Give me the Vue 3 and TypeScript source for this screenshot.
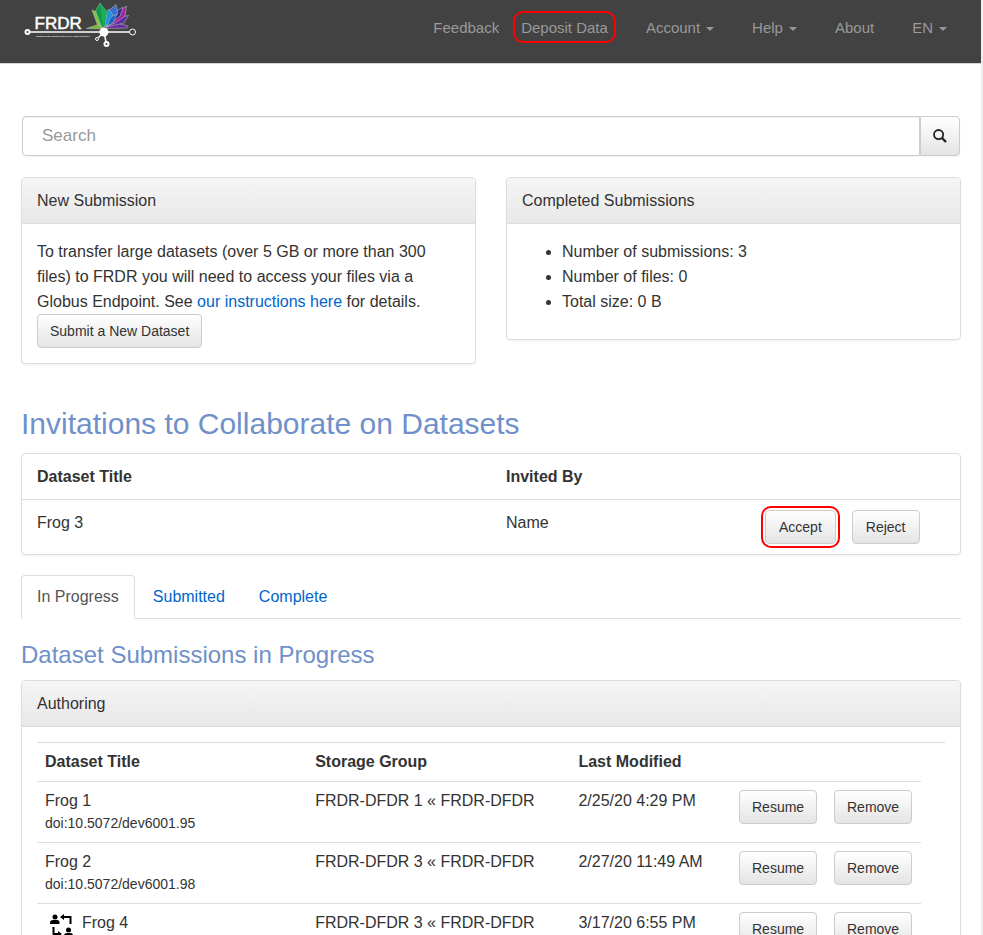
<script setup lang="ts">
import { ref } from 'vue'

interface NavItem {
  label: string
  menu: boolean
}

interface Submission {
  title: string
  doi?: string
  group: string
  modified: string
  shared: boolean
}

const navItems: NavItem[] = [
  { label: 'Account', menu: true },
  { label: 'Help', menu: true },
  { label: 'About', menu: false },
  { label: 'EN', menu: true },
]

const stats: string[] = ['Number of submissions: 3', 'Number of files: 0', 'Total size: 0 B']

const tabs: string[] = ['In Progress', 'Submitted', 'Complete']
const activeTab = ref<string>('In Progress')
const query = ref<string>('')

const submissions: Submission[] = [
  { title: 'Frog 1', doi: 'doi:10.5072/dev6001.95', group: 'FRDR-DFDR 1 « FRDR-DFDR', modified: '2/25/20 4:29 PM', shared: false },
  { title: 'Frog 2', doi: 'doi:10.5072/dev6001.98', group: 'FRDR-DFDR 3 « FRDR-DFDR', modified: '2/27/20 11:49 AM', shared: false },
  { title: 'Frog 4', group: 'FRDR-DFDR 3 « FRDR-DFDR', modified: '3/17/20 6:55 PM', shared: true },
]
</script>

<template>
  <div class="page">
    <header class="navbar">
      <a class="brand" href="#" aria-label="FRDR">
        <svg width="120" height="50" viewBox="0 0 240 100" aria-hidden="true">
          <g stroke="#b9c4cc" stroke-width="1" stroke-linejoin="round">
            <path d="M133 57 L153 50 L166 53 L163 58 Z" fill="#7cb83a" />
            <path d="M144 20 L158 26 L164 54 L155 50 Z" fill="#84c441" />
            <path d="M216 52 L194 46 L172 54 L176 57 L214 56 Z" fill="#6a2a9a" />
            <path d="M174 54 L190 36 L217 31 L208 46 Z" fill="#5f2d9e" />
            <path d="M172 54 L190 28 L213 12 L210 32 L190 46 Z" fill="#9a2a9c" />
            <path d="M172 54 L184 28 L206 14 L200 32 Z" fill="#2b2a86" />
            <path d="M170 52 L178 21 L192 9 L196 26 L182 46 Z" fill="#3a6fd0" />
            <path d="M167 54 L172 24 L178 18 L188 34 L176 50 Z" fill="#1d93dc" />
            <path d="M182 34 L194 28 L186 46 L174 52 Z" fill="#1c62c0" />
            <path d="M164 56 L151 22 L160 6 L174 24 L170 52 Z" fill="#0c9a48" />
            <path d="M160 6 L166 54 L174 24 Z" fill="#1fae55" stroke="none" />
          </g>
          <g fill="none" stroke="#fff">
            <path d="M18 64 H219" stroke-width="3" />
            <path d="M168 64 L157 75 M168 64 L172 84" stroke-width="3" />
            <circle cx="15" cy="64" r="4" stroke-width="4" fill="#424242" />
            <circle cx="225" cy="64" r="6" stroke-width="2" fill="#424242" />
            <circle cx="154" cy="78" r="3" stroke-width="2" fill="#424242" />
            <circle cx="173" cy="88" r="4" stroke-width="4" fill="#424242" />
          </g>
          <circle cx="168" cy="64" r="9" fill="#fff" />
          <text class="logo-name" x="29" y="58">FRDR</text>
          <text class="logo-tag" x="32" y="73">FEDERATED RESEARCH DATA REPOSITORY</text>
        </svg>
      </a>
      <nav class="nav">
        <div class="nav-pair">
          <a href="#">Feedback</a>
          <a href="#" class="marked nav-marked">Deposit Data</a>
        </div>
        <a v-for="item in navItems" :key="item.label" href="#">
          {{ item.label }}<span v-if="item.menu" class="caret"></span>
        </a>
      </nav>
    </header>

    <main class="content">
      <form class="search" role="search" @submit.prevent>
        <input v-model="query" type="search" placeholder="Search" aria-label="Search" />
        <button type="submit" aria-label="Search">
          <svg width="14" height="14" viewBox="0 0 14 14" aria-hidden="true">
            <circle cx="5.6" cy="5.6" r="4.6" fill="none" stroke="#222" stroke-width="1.8" />
            <path d="M9 9 L13 13" stroke="#222" stroke-width="2.4" />
          </svg>
        </button>
      </form>

      <div class="cards">
        <section class="panel">
          <div class="panel-head">New Submission</div>
          <div class="panel-body">
            <p>
              To transfer large datasets (over 5 GB or more than 300 files) to FRDR you will need to
              access your files via a Globus Endpoint. See <a href="#">our instructions here</a> for details.
            </p>
            <button type="button" class="btn">Submit a New Dataset</button>
          </div>
        </section>
        <section class="panel">
          <div class="panel-head">Completed Submissions</div>
          <div class="panel-body">
            <ul class="stats">
              <li v-for="stat in stats" :key="stat">{{ stat }}</li>
            </ul>
          </div>
        </section>
      </div>

      <h2>Invitations to Collaborate on Datasets</h2>
      <div class="panel">
        <table class="invites">
          <thead>
            <tr>
              <th>Dataset Title</th>
              <th>Invited By</th>
              <th class="invite-actions"></th>
            </tr>
          </thead>
          <tbody>
            <tr>
              <td>Frog 3</td>
              <td>Name</td>
              <td>
                <div class="actions">
                  <span class="marked btn-marked"><button type="button" class="btn wide">Accept</button></span>
                  <button type="button" class="btn wide">Reject</button>
                </div>
              </td>
            </tr>
          </tbody>
        </table>
      </div>

      <div class="tabs" role="tablist">
        <button
          v-for="tab in tabs"
          :key="tab"
          type="button"
          role="tab"
          :aria-selected="tab === activeTab"
          :class="{ active: tab === activeTab }"
          @click="activeTab = tab"
        >
          {{ tab }}
        </button>
      </div>

      <h3>Dataset Submissions in Progress</h3>
      <section class="panel">
        <div class="panel-head">Authoring</div>
        <div class="panel-body">
          <table class="datasets">
            <colgroup>
              <col class="col-title" />
              <col class="col-group" />
              <col />
              <col class="col-action" />
              <col class="col-action" />
              <col class="col-end" />
            </colgroup>
            <thead>
              <tr>
                <th>Dataset Title</th>
                <th>Storage Group</th>
                <th>Last Modified</th>
                <th></th>
                <th></th>
                <th></th>
              </tr>
            </thead>
            <tbody>
              <tr v-for="row in submissions" :key="row.title">
                <td>
                  <div class="title">
                    <svg v-if="row.shared" width="24" height="24" viewBox="0 0 24 24" aria-hidden="true">
                      <circle cx="5" cy="3" r="2.5" />
                      <path d="M0 10 V8.5 Q0 6 3 6 H7 Q9.500 6 9.500 8.500 V10 Z" />
                      <circle cx="18.5" cy="16" r="2.5" />
                      <path d="M14 23 V21.5 Q14 19 17 19 H20.5 Q23 19 23 21.5 V23 Z" />
                      <path d="M13 3 H20.5 V10 M3.5 13 V20 H9" fill="none" stroke="#000" stroke-width="2" />
                      <path d="M10 3 L14 0 V6 Z M12 20 L8 17 V23 Z" />
                    </svg>
                    {{ row.title }}
                  </div>
                  <div v-if="row.doi" class="doi">{{ row.doi }}</div>
                </td>
                <td>{{ row.group }}</td>
                <td>{{ row.modified }}</td>
                <td><button type="button" class="btn">Resume</button></td>
                <td><button type="button" class="btn">Remove</button></td>
              </tr>
            </tbody>
          </table>
        </div>
      </section>
    </main>
  </div>
</template>

<style>
body {
  margin: 0;
  background: #fff;
}
</style>

<style scoped>
.page {
  box-sizing: border-box;
  height: 100vh;
  overflow: hidden;
  border-right: 2px solid #f0f0f0;
  color: #333;
  font: 16px/25px "Liberation Sans", Arial, sans-serif;
}

a {
  color: #0066cc;
  text-decoration: none;
}

button,
input {
  box-sizing: border-box;
  margin: 0;
  font-family: inherit;
}

.navbar {
  display: flex;
  justify-content: space-between;
  box-sizing: border-box;
  height: 64px;
  padding: 0 34px 0 20px;
  border-bottom: 1px solid #d5d5d5;
  background: #424242;
}

.brand svg {
  display: block;
}

.logo-name {
  fill: #fff;
  stroke: #fff;
  stroke-width: 1px;
  font-size: 34px;
}

.logo-tag {
  fill: #e8e8e8;
  font-size: 5px;
  font-weight: bold;
}

.nav,
.nav-pair {
  display: flex;
  align-items: flex-start;
}

.nav {
  gap: 38px;
  padding-top: 18px;
  font-size: 15px;
  line-height: 20px;
}

.nav-pair {
  gap: 22px;
}

.nav a {
  color: #999;
  white-space: nowrap;
}

.caret {
  display: inline-block;
  margin-left: 6px;
  border-top: 4px solid #999;
  border-right: 4px solid transparent;
  border-left: 4px solid transparent;
  vertical-align: middle;
}

.marked {
  position: relative;
}

.marked::after {
  content: "";
  position: absolute;
  border: 2px solid #f00;
  border-radius: 10px;
  pointer-events: none;
}

.nav-marked::after {
  inset: -7px -8px -5px;
}

.btn-marked::after {
  inset: -4px;
}

.content {
  padding: 52px 20px 0 21px;
}

.search {
  display: flex;
  height: 40px;
  margin: 0 1px 21px;
  border-radius: 4px;
  box-shadow: 0 1px 2px rgba(0, 0, 0, 0.05);
}

.search input {
  flex: 1;
  min-width: 0;
  padding: 0 19px;
  border: 1px solid #ccc;
  border-radius: 4px 0 0 4px;
  background: #fff;
  box-shadow: inset 0 1px 1px rgba(0, 0, 0, 0.05);
  color: #333;
  font-size: 17px;
  appearance: none;
}

.search input::placeholder {
  color: #999;
  opacity: 1;
}

.search button {
  display: flex;
  align-items: center;
  justify-content: center;
  width: 40px;
  padding: 0;
  border: 1px solid #ccc;
  border-radius: 0 4px 4px 0;
  background: linear-gradient(#fff, #e4e4e4);
}

.cards {
  display: grid;
  grid-template-columns: 1fr 1fr;
  align-items: start;
  gap: 30px;
}

.panel {
  border: 1px solid #ddd;
  border-radius: 4px;
  background: #fff;
  box-shadow: 0 1px 2px rgba(0, 0, 0, 0.05);
}

.panel-head {
  padding: 10px 15px;
  border-bottom: 1px solid #ddd;
  border-radius: 3px 3px 0 0;
  background: linear-gradient(#f5f5f5, #e8e8e8);
}

.panel-body {
  padding: 15px;
}

.panel-body p {
  margin: 0;
}

.stats {
  margin: 0 0 10px;
  padding-left: 40px;
}

.btn {
  display: block;
  height: 34px;
  padding: 0 12px;
  border: 1px solid #ccc;
  border-radius: 4px;
  background: linear-gradient(#fff, #e4e4e4);
  color: #333;
  font-size: 14px;
  white-space: nowrap;
}

.btn.wide {
  padding: 0 13px;
}

h2,
h3 {
  color: #6f90ca;
  font-weight: normal;
}

h2 {
  margin: 43px 0 13px;
  font-size: 30px;
  line-height: 33px;
}

h3 {
  margin: 23px 0 12px;
  font-size: 24px;
  line-height: 26px;
}

table {
  width: 100%;
  border-collapse: separate;
  border-spacing: 0;
  table-layout: fixed;
}

th,
td {
  text-align: left;
  vertical-align: top;
}

.invites th,
.invites td {
  padding: 10px 0;
}

.invites th:first-child,
.invites td:first-child {
  padding-left: 15px;
}

.invites th:first-child {
  box-sizing: border-box;
  width: 50%;
}

.invites th:nth-child(2),
.invites td:nth-child(2) {
  padding-left: 15px;
}

.invites td {
  border-top: 1px solid #ddd;
}

.invite-actions {
  width: 195px;
}

.actions {
  display: flex;
  gap: 16px;
}

.tabs {
  display: flex;
  gap: 2px;
  height: 43px;
  margin-top: 20px;
  border-bottom: 1px solid #ddd;
}

.tabs button {
  height: 44px;
  padding: 0 15px 2px;
  border: 1px solid transparent;
  border-radius: 4px 4px 0 0;
  background: none;
  color: #0066cc;
  font-size: 16px;
  line-height: 23px;
}

.tabs button.active {
  border-color: #ddd #ddd #fff;
  background: #fff;
  color: #555;
}

.col-title {
  width: 29.75%;
}

.col-group {
  width: 29%;
}

.col-action {
  width: 95px;
}

.col-end {
  width: 24px;
}

.datasets th,
.datasets td {
  padding: 8px;
  border-top: 1px solid #ddd;
  line-height: 22px;
}

.datasets td:last-child {
  padding-bottom: 18px;
}

.title {
  display: flex;
  gap: 8px;
}

.title svg {
  margin: 2px 0 0 5px;
}

.datasets .doi {
  font-size: 14px;
  line-height: 22px;
}
</style>
